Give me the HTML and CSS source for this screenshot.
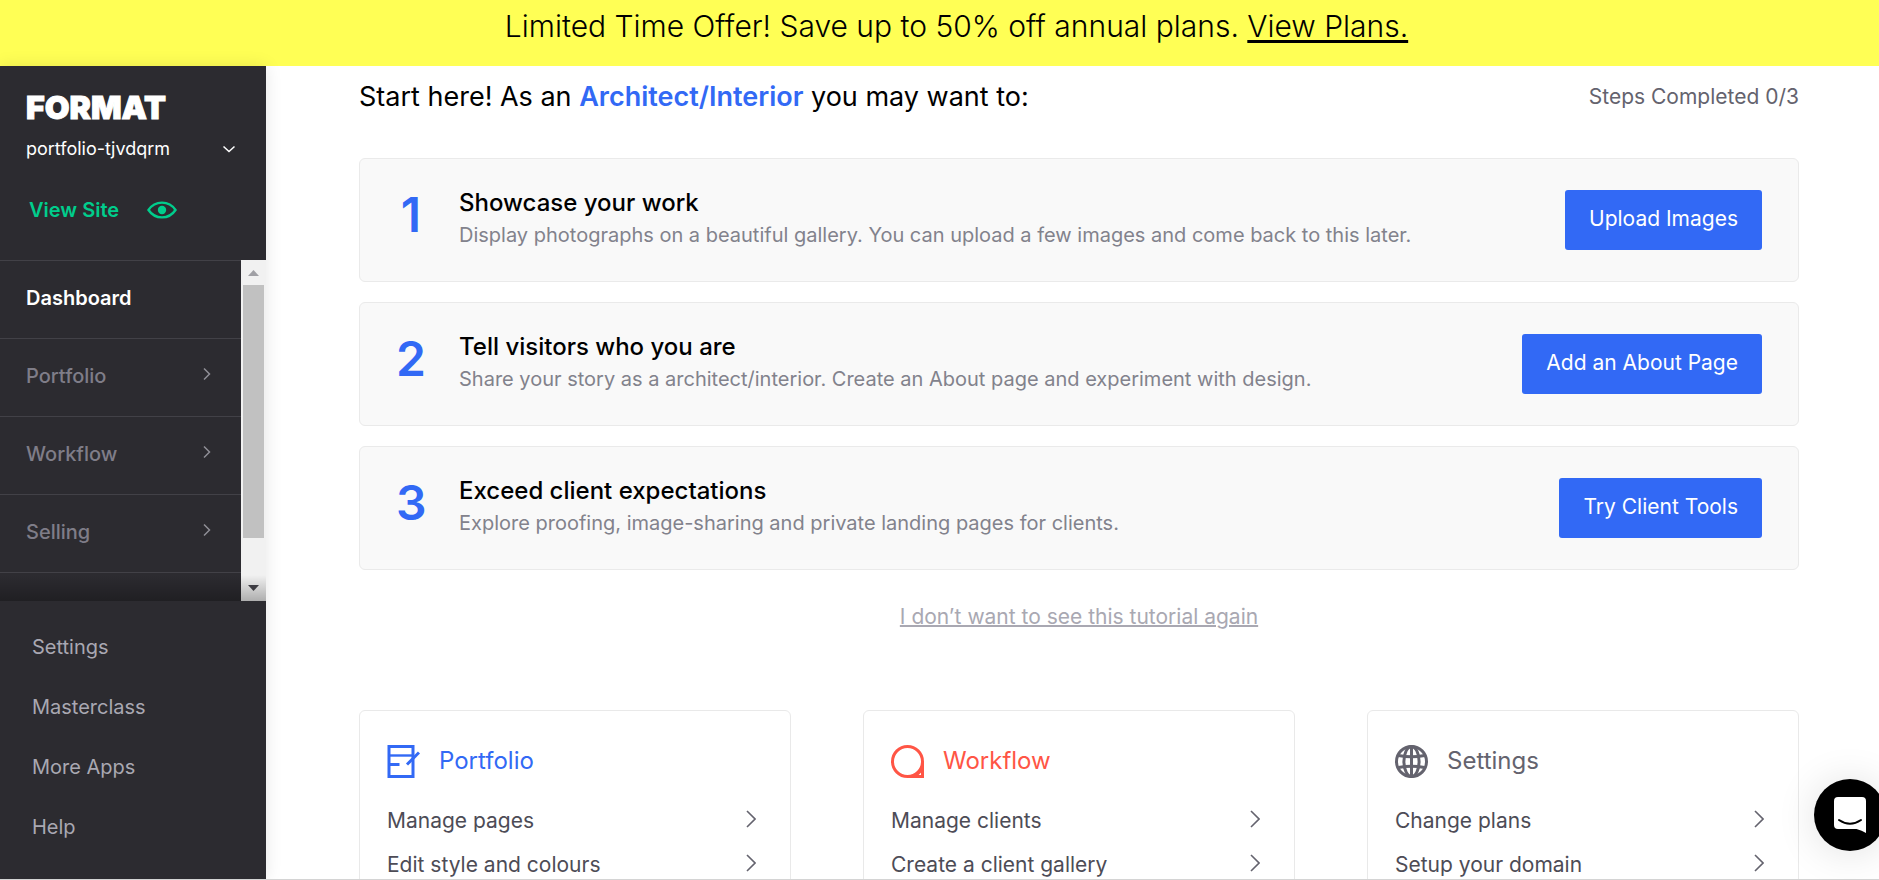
FILE: index.html
```html
<!DOCTYPE html>
<html lang="en">
<head>
  <meta charset="UTF-8" />
  <meta name="viewport" content="width=device-width, initial-scale=1.0"/>
  <title>Format - Dashboard</title>
  <link rel="stylesheet" href="styles.css">
</head>
<body>

  <div class="banner">
    <p>Limited Time Offer! Save up to 50% off annual plans. <a href="#">View Plans.</a></p>
  </div>

  <div class="layout">
    <div class="sidebar">
      <div class="site-info">
        <div class="logo">FORMAT</div>
        <button class="site-switch">
          <span>portfolio-tjvdqrm</span>
          <svg width="14" height="9" viewBox="0 0 14 9"><path d="M1.5 1.5 L7 6.5 L12.5 1.5"/></svg>
        </button>
        <a class="view-site" href="#">
          <span>View Site</span>
          <svg width="30" height="18" viewBox="0 0 30 18">
            <path d="M1.5 9 C8 -0.8 22 -0.8 28.5 9 C22 18.8 8 18.8 1.5 9 Z"/>
            <circle cx="15" cy="9" r="4.2"/>
          </svg>
        </a>
      </div>

      <div class="nav-area">
        <nav class="main-nav">
          <a class="active" href="#">Dashboard</a>
          <a href="#">Portfolio <svg width="8" height="14" viewBox="0 0 8 14"><path d="M1 1.5 L6.5 7 L1 12.5"/></svg></a>
          <a href="#">Workflow <svg width="8" height="14" viewBox="0 0 8 14"><path d="M1 1.5 L6.5 7 L1 12.5"/></svg></a>
          <a href="#">Selling <svg width="8" height="14" viewBox="0 0 8 14"><path d="M1 1.5 L6.5 7 L1 12.5"/></svg></a>
        </nav>
        <div class="scrollbar">
          <svg width="25" height="25" viewBox="0 0 25 25"><path fill="#a0a0a5" d="M7 16 L12.5 10 L18 16 Z"/></svg>
          <div class="track"><div class="thumb"></div></div>
          <svg width="25" height="25" viewBox="0 0 25 25"><path fill="#45444b" d="M7 9 L18 9 L12.5 15 Z"/></svg>
        </div>
        <div class="nav-shadow"></div>
      </div>

      <nav class="sub-nav">
        <a href="#">Settings</a>
        <a href="#">Masterclass</a>
        <a href="#">More Apps</a>
        <a href="#">Help</a>
      </nav>
    </div>

    <div class="main">
      <div class="header">
        <h1>Start here! As an <b>Architect/Interior</b> you may want to:</h1>
        <div class="status">Steps Completed 0/3</div>
      </div>

      <div class="steps">
        <div class="step">
          <div class="number">1</div>
          <div class="step-text">
            <h2>Showcase your work</h2>
            <p>Display photographs on a beautiful gallery. You can upload a few images and come back to this later.</p>
          </div>
          <button>Upload Images</button>
        </div>
        <div class="step">
          <div class="number">2</div>
          <div class="step-text">
            <h2>Tell visitors who you are</h2>
            <p>Share your story as a architect/interior. Create an About page and experiment with design.</p>
          </div>
          <button>Add an About Page</button>
        </div>
        <div class="step">
          <div class="number">3</div>
          <div class="step-text">
            <h2>Exceed client expectations</h2>
            <p>Explore proofing, image-sharing and private landing pages for clients.</p>
          </div>
          <button>Try Client Tools</button>
        </div>
      </div>

      <a class="dismiss" href="#">I don’t want to see this tutorial again</a>

      <div class="cards">
        <div class="card portfolio">
          <h3>
            <svg width="33" height="33" viewBox="0 0 33 33" fill="none" stroke="currentColor" stroke-width="3">
              <path d="M2 1.5 H26 V31.5 H2 Z"/>
              <path d="M2 10.5 H27" stroke-width="2.4"/>
              <path d="M1 19.5 H12.5" stroke-width="3"/>
              <path d="M20 19.5 L32 7.5" stroke-width="3"/>
            </svg>
            Portfolio
          </h3>
          <a href="#">Manage pages <svg width="10" height="18" viewBox="0 0 10 18"><path d="M1 1 L9 9 L1 17"/></svg></a>
          <a href="#">Edit style and colours <svg width="10" height="18" viewBox="0 0 10 18"><path d="M1 1 L9 9 L1 17"/></svg></a>
        </div>
        <div class="card workflow">
          <h3>
            <svg width="33" height="33" viewBox="0 0 33 33" fill="none" stroke="currentColor" stroke-width="3">
              <circle cx="16.5" cy="16.5" r="15"/>
              <path d="M16.5 31.5 H31.5 V16.5"/>
              <path d="M25 31 L31 25" stroke-width="2.4"/>
            </svg>
            Workflow
          </h3>
          <a href="#">Manage clients <svg width="10" height="18" viewBox="0 0 10 18"><path d="M1 1 L9 9 L1 17"/></svg></a>
          <a href="#">Create a client gallery <svg width="10" height="18" viewBox="0 0 10 18"><path d="M1 1 L9 9 L1 17"/></svg></a>
        </div>
        <div class="card settings">
          <h3>
            <svg width="33" height="33" viewBox="0 0 33 33" fill="none" stroke="currentColor" stroke-width="3">
              <circle cx="16.5" cy="16.5" r="15"/>
              <ellipse cx="16.5" cy="16.5" rx="7.6" ry="15"/>
              <path d="M16.5 1.5 V31.5"/>
              <path d="M3.5 10.5 Q16.5 13.2 29.5 10.5"/>
              <path d="M3.5 22.5 Q16.5 19.8 29.5 22.5"/>
            </svg>
            Settings
          </h3>
          <a href="#">Change plans <svg width="10" height="18" viewBox="0 0 10 18"><path d="M1 1 L9 9 L1 17"/></svg></a>
          <a href="#">Setup your domain <svg width="10" height="18" viewBox="0 0 10 18"><path d="M1 1 L9 9 L1 17"/></svg></a>
        </div>
      </div>
    </div>
  </div>

  <button class="chat" aria-label="Open chat">
    <svg width="32" height="38" viewBox="0 0 32 38">
      <path fill="#fff" d="M4 1 H28 Q32 1 32 5 V37 Q28 34.5 22.5 33 H4 Q0 33 0 29 V5 Q0 1 4 1 Z"/>
      <path fill="none" stroke="#000" stroke-width="2" stroke-linecap="round" d="M5 24 Q16 31.5 27 24"/>
    </svg>
  </button>

</body>
</html>
```
FILE: styles.css
```css
* {
  box-sizing: border-box;
}
body {
  margin: 0;
  font-family: "Inter", "Liberation Sans", sans-serif;
  font-size: 20px;
  line-height: 28px;
  color: #000;
  background-color: white;
  display: flex;
  flex-direction: column;
  height: 100vh;
  overflow: hidden;
  border-bottom: 1px solid #d4d4d4;
}
h1, h2, h3, p {
  margin: 0;
  font-weight: 400;
}
a {
  color: inherit;
  text-decoration: none;
}
button {
  font-family: inherit;
  border: none;
  cursor: pointer;
}

/* Offer banner */
.banner {
  flex: none;
  height: 66px;
  padding-top: 8px;
  background-color: #ffff55;
  text-align: center;
}
.banner p {
  padding-left: 34px;
  font-size: 30px;
  line-height: 36px;
  font-weight: 300;
}
.banner a {
  text-decoration: underline;
  text-decoration-thickness: 3px;
  text-underline-offset: 3px;
}

.layout {
  flex: 1;
  min-height: 0;
  display: flex;
}

/* Sidebar */
.sidebar {
  flex: none;
  width: 266px;
  background-color: #2c2b30;
  box-shadow: 0 0 16px rgba(0, 0, 0, 0.1);
  display: flex;
  flex-direction: column;
}
.site-info {
  height: 194px;
  padding: 24px 30px 0 26px;
}
.logo {
  color: white;
  font-size: 32px;
  line-height: 36px;
  font-weight: 900;
  -webkit-text-stroke: 1px white;
}
.site-switch {
  display: flex;
  justify-content: space-between;
  align-items: center;
  width: 100%;
  margin-top: 8px;
  padding: 0;
  background: none;
  color: white;
  font-size: 18px;
  line-height: 30px;
}
.site-switch svg {
  fill: none;
  stroke: white;
  stroke-width: 1.5;
}
.view-site {
  display: flex;
  align-items: center;
  gap: 28px;
  margin-top: 32px;
  padding-left: 3px;
  color: #00cd8c;
  font-weight: 600;
}
.view-site path {
  fill: none;
  stroke: #00cd8c;
  stroke-width: 2.4;
}
.view-site circle {
  fill: #00cd8c;
}
.nav-area {
  flex: 1;
  min-height: 0;
  display: flex;
  position: relative;
}
.main-nav {
  flex: 1;
  overflow: hidden;
  border-top: 1px solid #424147;
}
.main-nav a {
  display: flex;
  justify-content: space-between;
  align-items: center;
  height: 78px;
  padding: 0 30px 4px 26px;
  border-bottom: 1px solid #424147;
  color: #7f7d88;
  font-weight: 500;
}
.main-nav a.active {
  color: white;
  font-weight: 600;
}
.main-nav svg {
  margin-bottom: 4px;
  fill: none;
  stroke: #8f8e96;
  stroke-width: 1.5;
}
.scrollbar {
  width: 25px;
  background-color: #f1f1f1;
  display: flex;
  flex-direction: column;
}
.track {
  flex: 1;
  padding: 0 2px;
}
.thumb {
  height: 87%;
  background-color: #c1c1c1;
}
.nav-shadow {
  position: absolute;
  left: 0;
  right: 0;
  bottom: 0;
  height: 26px;
  background: linear-gradient(rgba(0, 0, 0, 0), rgba(0, 0, 0, 0.28));
}
.sub-nav {
  padding: 16px 0 22px 32px;
}
.sub-nav a {
  display: block;
  line-height: 60px;
  color: #a9a8b2;
}

/* Main area */
.main {
  flex: 1;
  min-width: 0;
  padding: 13px 80px 0 93px;
  font-size: 21px;
  overflow: hidden;
}
.header {
  display: flex;
  justify-content: space-between;
  align-items: center;
  color: #64636e;
}
.header h1 {
  color: #000;
  font-size: 27px;
  line-height: 36px;
}
.header b {
  color: #3269f5;
  font-weight: 600;
}
.steps {
  display: grid;
  gap: 20px;
  margin-top: 43px;
}
.step {
  display: flex;
  align-items: center;
  height: 124px;
  padding: 0 36px;
  background-color: #f9f9f9;
  border: 1px solid #eaeaea;
  border-radius: 6px;
}
.number {
  width: 30px;
  margin-right: 33px;
  padding-bottom: 10px;
  color: #3269f5;
  font-size: 48px;
  line-height: 48px;
  font-weight: 600;
  text-align: center;
}
.step-text {
  flex: 1;
  padding-bottom: 2px;
}
.step h2 {
  font-size: 24px;
  line-height: 32px;
  font-weight: 500;
}
.step p {
  font-size: 20px;
  line-height: 32px;
  color: #82828c;
}
.step button {
  height: 60px;
  padding: 0 24px 4px;
  background-color: #3269f5;
  color: white;
  font-size: 21px;
  border-radius: 3px;
}
.dismiss {
  display: block;
  width: fit-content;
  margin: 33px auto 0;
  color: #a9a8b2;
  text-decoration: underline;
  text-decoration-thickness: 2px;
}

/* Shortcut cards */
.cards {
  display: grid;
  grid-template-columns: repeat(3, 1fr);
  gap: 72px;
  margin-top: 79px;
}
.card {
  padding: 32px 34px 32px 27px;
  border: 1px solid #e9e9e9;
  border-radius: 6px;
  color: #4d4c56;
}
.card h3 {
  display: flex;
  align-items: center;
  gap: 19px;
  margin-bottom: 20px;
  font-size: 24px;
  line-height: 36px;
}
.card a {
  display: flex;
  justify-content: space-between;
  align-items: center;
  line-height: 44px;
}
.card a svg {
  margin-bottom: 4px;
  fill: none;
  stroke: #64636e;
  stroke-width: 1.6;
}
.portfolio h3 {
  color: #3269f5;
}
.workflow h3 {
  color: #ff5545;
}
.settings h3 {
  color: #64636e;
}

/* Chat launcher */
.chat {
  position: absolute;
  right: -7px;
  bottom: 29px;
  width: 72px;
  height: 72px;
  padding: 0;
  border-radius: 50%;
  background-color: #000;
  box-shadow: 0 2px 40px rgba(0, 0, 0, 0.12);
}
.chat svg {
  display: block;
  margin: auto;
}
```
